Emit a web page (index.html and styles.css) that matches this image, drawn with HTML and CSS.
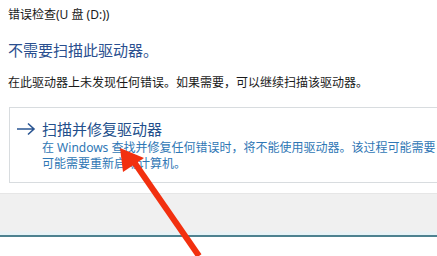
FILE: index.html
```html
<!DOCTYPE html>
<html lang="zh-CN">
<head>
  <meta charset="UTF-8">
  <meta name="viewport" content="width=device-width, initial-scale=1.0">
  <title>错误检查</title>
  <link rel="stylesheet" href="styles.css">
</head>
<body>
  <div class="dlg">
    <div class="dlg_title">错误检查(U 盘 (D:))</div>
    <div class="dlg_main">
      <h1 class="heading">不需要扫描此驱动器。</h1>
      <p class="info">在此驱动器上未发现任何错误。如果需要，可以继续扫描该驱动器。</p>
      <div class="option">
        <svg class="option_arrow" width="20" height="14" viewBox="0 0 20 14">
          <path d="M1 7 H18 M12 1.5 L18 7 L12 12.5" fill="none" stroke="#2a5592" stroke-width="1.6"/>
        </svg>
        <div class="option_text">
          <div class="option_name">扫描并修复驱动器</div>
          <div class="option_desc">在 Windows 查找并修复任何错误时，将不能使用驱动器。该过程可能需要<br>可能需要重新启动计算机。</div>
        </div>
      </div>
    </div>
    <div class="dlg_foot"></div>
  </div>
  <svg class="mark" width="437" height="256" viewBox="0 0 437 256">
    <line x1="134" y1="162" x2="199" y2="256" stroke="#f2300f" stroke-width="6"/>
    <polygon points="120,148 123,172 144,158" fill="#f2300f"/>
  </svg>
</body>
</html>
```

FILE: styles.css
```css
* {
  box-sizing: border-box;
}

body {
  margin: 0;
  width: 437px;
  height: 256px;
  overflow: hidden;
  position: relative;
  background: #fff;
  color: #1a1a1a;
  font-family: "Noto Sans", "Noto Sans CJK SC", sans-serif;
}

.dlg_title {
  padding: 7px 8px 0;
  font-size: 12px;
  line-height: 16px;
}

.dlg_main {
  padding: 0 0 0 8px;
}

.heading {
  margin: 17px 0 0;
  color: #2a4f8f;
  font-size: 15px;
  font-weight: 400;
  line-height: 20px;
}

.info {
  margin: 15px 0 0;
  font-size: 12px;
  line-height: 16px;
}

/* box runs off the right edge of the window */
.option {
  display: flex;
  overflow: hidden;
  margin: 16px 0 0 1px;
  padding: 11px 0 10px 6px;
  border: 1px solid #d8dcdf;
  border-right: 0;
}

.option_arrow {
  flex: none;
  margin: 3px 6px 0 0;
}

.option_name {
  color: #234f8c;
  font-size: 15px;
  line-height: 20px;
}

.option_desc {
  margin-top: 1px;
  color: #2f77b5;
  font-size: 12px;
  line-height: 16px;
  white-space: nowrap;
}

.dlg_foot {
  height: 44px;
  margin-top: 10px;
  border-top: 1px solid #e6e6e6;
  border-bottom: 2px solid #4d8290;
  background: linear-gradient(#f0f0f0 0, #f0f0f0 36px, #e6f3f7 40px);
}

.mark {
  position: absolute;
  top: 0;
  left: 0;
}
```
